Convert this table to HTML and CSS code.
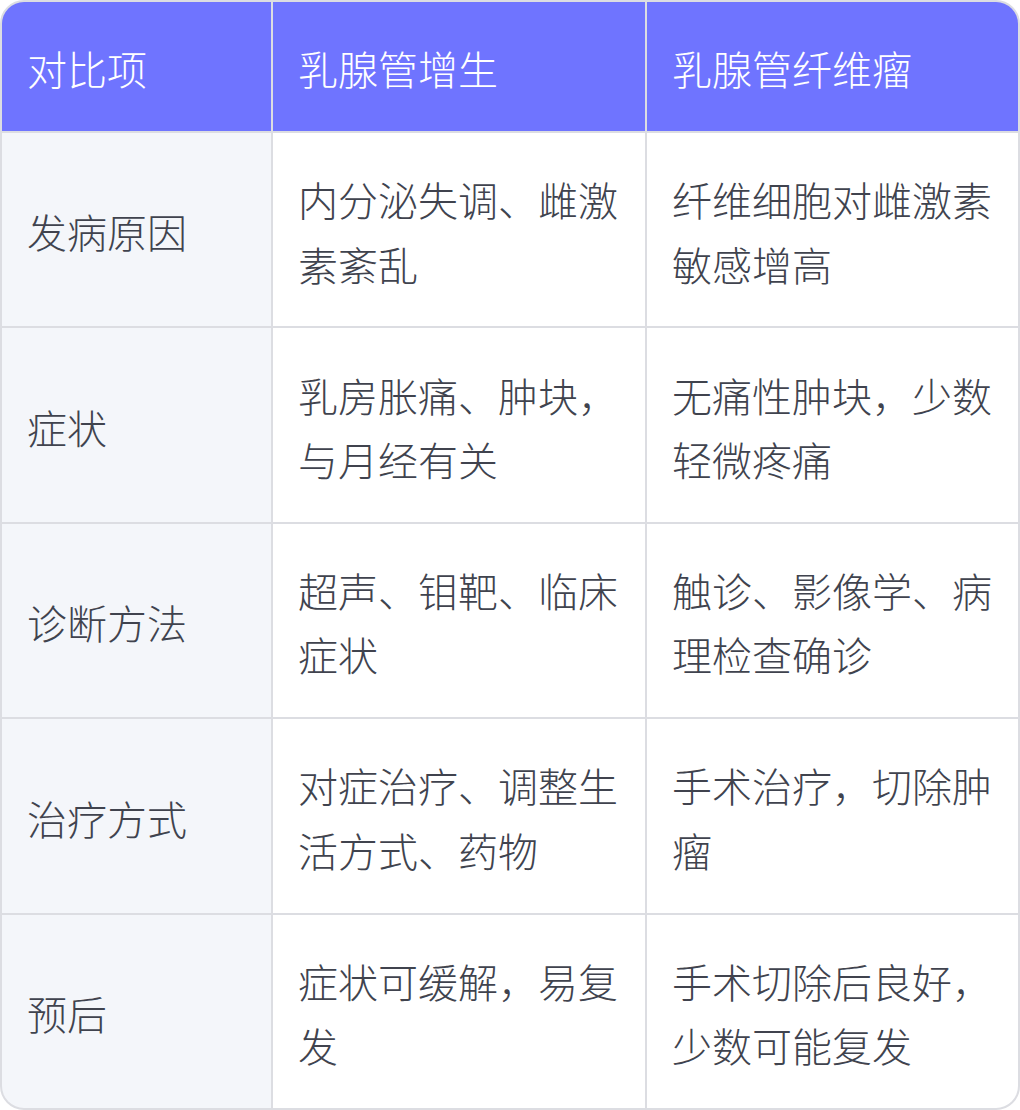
FILE: index.html
```html
<!DOCTYPE html>
<html lang="zh-CN">
<head>
<meta charset="utf-8">
<title>乳腺管增生与乳腺管纤维瘤对比</title>
<link rel="stylesheet" href="styles.css">
</head>
<body>
<div class="table">
  <div class="cell head">对比项</div>
  <div class="cell head">乳腺管增生</div>
  <div class="cell head">乳腺管纤维瘤</div>

  <div class="cell label">发病原因</div>
  <div class="cell">内分泌失调、雌激素紊乱</div>
  <div class="cell">纤维细胞对雌激素敏感增高</div>

  <div class="cell label">症状</div>
  <div class="cell">乳房胀痛、肿块，与月经有关</div>
  <div class="cell">无痛性肿块，少数轻微疼痛</div>

  <div class="cell label">诊断方法</div>
  <div class="cell">超声、钼靶、临床症状</div>
  <div class="cell">触诊、影像学、病理检查确诊</div>

  <div class="cell label">治疗方式</div>
  <div class="cell">对症治疗、调整生活方式、药物</div>
  <div class="cell">手术治疗，切除肿瘤</div>

  <div class="cell label">预后</div>
  <div class="cell">症状可缓解，易复发</div>
  <div class="cell">手术切除后良好，少数可能复发</div>
</div>
</body>
</html>
```

FILE: styles.css
```css
html, body {
  margin: 0;
  padding: 0;
  background: #ffffff;
}

.table {
  box-sizing: border-box;
  width: 1020px;
  height: 1110px;
  display: grid;
  grid-template-columns: 269px 372px 1fr;
  grid-template-rows: 129px repeat(5, 1fr);
  gap: 2px;
  background: #dcdde2;
  border: 2px solid #dcdde2;
  border-radius: 24px;
  overflow: hidden;
  font-family: "Noto Sans CJK SC", "Noto Sans", sans-serif;
  font-size: 40px;
  font-weight: 300;
  line-height: 64.5px;
  color: #40434e;
}

.cell {
  display: flex;
  align-items: center;
  padding: 4px 24px 0 25px;
  background: #ffffff;
}

.head {
  background: #6f74ff;
  color: #ffffff;
}

.label {
  background: #f4f6fa;
}
```
